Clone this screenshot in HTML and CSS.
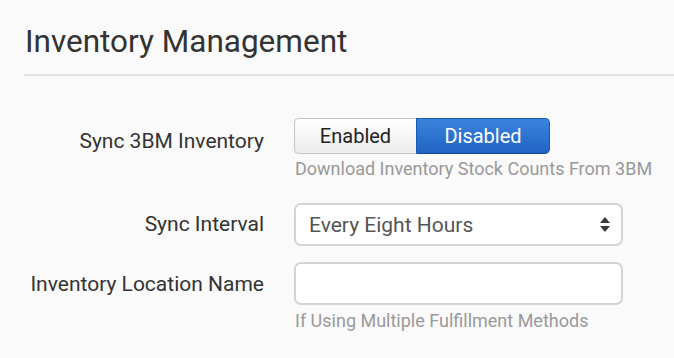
FILE: index.html
```html
<!DOCTYPE html>
<html lang="en">
<head>
    <meta charset="UTF-8">
    <title>Inventory Management</title>
    <link rel="stylesheet" href="styles.css">
</head>
<body>
    <div class="panel">
        <h2 class="panel-title">Inventory Management</h2>

        <div class="form-row row-toggle">
            <label class="form-label">Sync 3BM Inventory</label>
            <div class="form-field">
                <div class="toggle">
                    <button class="toggle-btn">Enabled</button>
                    <button class="toggle-btn active">Disabled</button>
                </div>
                <p class="help">Download Inventory Stock Counts From 3BM</p>
            </div>
        </div>

        <div class="form-row row-select">
            <label class="form-label">Sync Interval</label>
            <div class="form-field">
                <div class="select">
                    <span>Every Eight Hours</span>
                    <svg class="select-arrows" width="10" height="15" viewBox="0 0 10 15">
                        <path d="M5 0 L10 6 L0 6 Z" fill="#3a3a3a"/>
                        <path d="M0 9 L10 9 L5 15 Z" fill="#3a3a3a"/>
                    </svg>
                </div>
            </div>
        </div>

        <div class="form-row row-input">
            <label class="form-label">Inventory Location Name</label>
            <div class="form-field">
                <input type="text" class="text-input">
                <p class="help help-low">If Using Multiple Fulfillment Methods</p>
            </div>
        </div>
    </div>
</body>
</html>
```

FILE: styles.css
```css
* {
    margin: 0;
    padding: 0;
    box-sizing: border-box;
}

body {
    font-family: 'Roboto', 'Liberation Sans', sans-serif;
    background: #fafafa;
    color: #333;
    width: 674px;
    height: 358px;
    overflow: hidden;
}

.panel {
    padding: 23px 0 0 24px;
}

.panel-title {
    font-size: 31.5px;
    font-weight: 400;
    color: #333;
    padding-left: 1px;
    padding-bottom: 13px;
    border-bottom: 2px solid #e2e2e2;
    line-height: 38px;
}

.form-row {
    display: flex;
    align-items: flex-start;
}

.form-label {
    width: 240px;
    text-align: right;
    font-size: 21px;
    color: #333;
    line-height: 42px;
    flex-shrink: 0;
}

.form-field {
    margin-left: 30px;
}

.row-toggle {
    margin-top: 42px;
}

.row-toggle .form-label {
    line-height: 36px;
    padding-top: 5px;
}

.toggle {
    display: flex;
    width: 256px;
    height: 36px;
}

.toggle-btn {
    font-family: 'Roboto', 'Liberation Sans', sans-serif;
    font-size: 20px;
    border: 1px solid #c4c4c4;
    border-right: none;
    background: linear-gradient(#ffffff, #ececec);
    color: #222;
    width: 122px;
    border-radius: 5px 0 0 5px;
}

.toggle-btn.active {
    width: 134px;
    background: linear-gradient(#3b84dd, #1f63c4);
    border: 1px solid #1b58b0;
    border-bottom-color: #164a96;
    color: #fff;
    border-radius: 0 5px 5px 0;
}

.help {
    font-size: 18px;
    line-height: 22px;
    color: #999;
    margin-top: 4px;
    margin-left: 1px;
}

.help-low {
    margin-top: 5px;
}

.row-select {
    margin-top: 23px;
}

.select {
    width: 329px;
    height: 43px;
    border: 2px solid #d4d4d4;
    border-radius: 7px;
    background: #fff;
    display: flex;
    align-items: center;
    justify-content: space-between;
    padding: 0 11px 0 13px;
    font-size: 21px;
    color: #555;
}

.row-select .form-label {
    line-height: 43px;
}

.row-input {
    margin-top: 16px;
}

.row-input .form-label {
    padding-top: 1px;
}

.text-input {
    display: block;
    width: 329px;
    height: 43px;
    border: 2px solid #d4d4d4;
    border-radius: 7px;
    background: #fff;
}
```
